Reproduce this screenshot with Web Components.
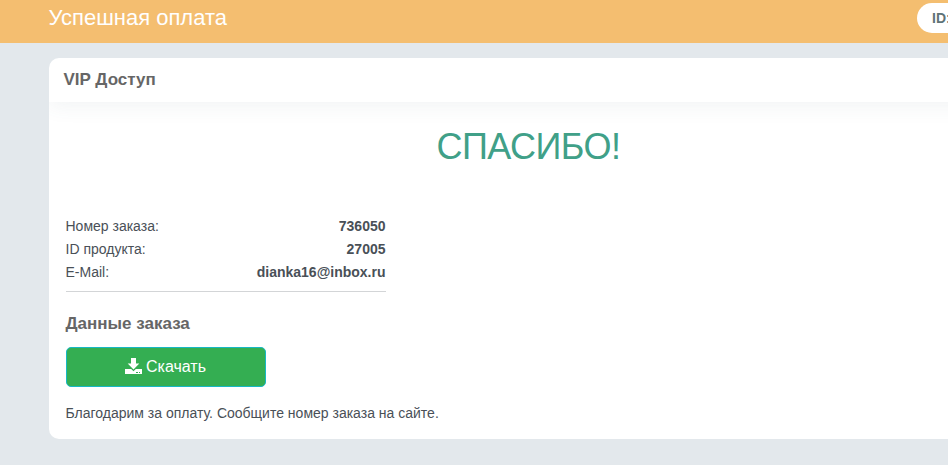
<!DOCTYPE html>
<html lang="ru">
<head>
<meta charset="utf-8">
<title>Успешная оплата</title>
<style>
  body {
    margin: 0;
    height: 465px;
    overflow: hidden;
    background: #e3e8ec;
    color: #495057;
    font: 14px/23px "Liberation Sans", Arial, sans-serif;
  }
</style>
</head>
<body>
<pay-page>
  <top-bar slot="top" heading="Успешная оплата"><id-badge>ID:</id-badge></top-bar>
  <order-card heading="VIP Доступ">
    <thank-you>СПАСИБО!</thank-you>
    <order-info>
      <info-row label="Номер заказа:">736050</info-row>
      <info-row label="ID продукта:">27005</info-row>
      <info-row label="E-Mail:">dianka16@inbox.ru</info-row>
    </order-info>
    <order-data heading="Данные заказа">
      <download-button slot="action">Скачать</download-button>
      Благодарим за оплату. Сообщите номер заказа на сайте.
    </order-data>
  </order-card>
</pay-page>

<script>
  // Общая функция: регистрирует элемент с его разметкой
  function crear(name, render) {
    customElements.define(name, class extends HTMLElement {
      constructor() {
        super();
        this.attachShadow({mode: "open"});
      }
      connectedCallback() {
        this.shadowRoot.innerHTML = render(this);
      }
    });
  }

  // Страница: шапка и содержимое
  crear("pay-page", () => `
    <style>
      :host { display: block; overflow: hidden; }
      main { padding: 15px 0 0 49px; }
    </style>
    <slot name="top"></slot>
    <main><slot></slot></main>
  `);

  crear("top-bar", (el) => `
    <style>
      :host {
        display: flex;
        justify-content: space-between;
        height: 43px;
        padding-left: 48.5px;
        box-sizing: border-box;
        background: #f4be70;
      }
      h1 { margin: 5px 0 0; font-size: 22px; line-height: 26px; font-weight: 400; color: #fff; }
    </style>
    <h1>${el.getAttribute("heading")}</h1>
    <slot></slot>
  `);

  crear("id-badge", () => `
    <style>
      :host {
        display: block;
        box-sizing: border-box;
        width: 31px;
        height: 30px;
        margin-top: 3px;
        padding-left: 15px;
        white-space: nowrap;
        border-radius: 15px 0 0 15px;
        background: #fff;
        color: #5f7377;
        font-weight: 700;
        line-height: 30px;
      }
    </style>
    <slot></slot>
  `);

  // Карточка заказа
  crear("order-card", (el) => `
    <style>
      :host {
        display: block;
        height: 381px;
        overflow: hidden;
        border-radius: 10px 0 0 10px;
        background: #fff;
      }
      header {
        height: 44px;
        margin-right: -60px;
        padding: 0 14.5px;
        box-shadow: 0 5px 20px rgba(69, 101, 115, .07);
      }
      h2 { margin: 0; font-size: 17px; line-height: 43px; color: #666; }
      section { padding: 0 17px; }
    </style>
    <header><h2>${el.getAttribute("heading")}</h2></header>
    <section><slot></slot></section>
  `);

  crear("thank-you", () => `
    <style>
      :host {
        display: block;
        margin-right: -60px;
        padding-top: 25px;
        text-align: center;
        color: #40a088;
        font-size: 36px;
        line-height: 40px;
        letter-spacing: -.5px;
      }
    </style>
    <slot></slot>
  `);

  crear("order-info", () => `
    <style>
      :host {
        display: block;
        width: 320px;
        margin-top: 48px;
        padding-bottom: 7px;
        border-bottom: 1px solid #d3d5d7;
      }
    </style>
    <slot></slot>
  `);

  crear("info-row", (el) => `
    <style>
      :host {
        display: flex;
        justify-content: space-between;
        height: 23px;
        margin: 0 .5px 0 -.5px;
      }
    </style>
    <span>${el.getAttribute("label")}</span>
    <b><slot></slot></b>
  `);

  crear("order-data", (el) => `
    <style>
      :host { display: block; }
      h3 { margin: 20px 0 12px -.5px; font-size: 17px; line-height: 23px; color: #666; }
      p { margin: 15px 0 0 -.5px; }
    </style>
    <h3>${el.getAttribute("heading")}</h3>
    <slot name="action"></slot>
    <p><slot></slot></p>
  `);

  crear("download-button", () => `
    <style>
      :host { display: block; width: 200px; }
      button {
        display: flex;
        align-items: center;
        justify-content: center;
        gap: 4px;
        width: 100%;
        height: 40px;
        padding: 0 1px 0 0;
        border: 1px solid #17b8c4;
        border-radius: 5px;
        background: #34ae52;
        color: #fff;
        font: 16px/22px "Liberation Sans", Arial, sans-serif;
      }
      svg { display: block; margin-bottom: 1px; }
    </style>
    <button>
      <svg width="17" height="17" viewBox="0 0 17 17">
        <path fill="#fff" d="M6 0h5v5.5h3.3L8.5 11.5 2.7 5.5H6z"/>
        <path fill="#fff" d="M0 11h6.2l2.3 2.2 2.3-2.2H17v5H0z"/>
        <path fill="#34ae52" d="M11 14h2v1h-2zM14 14h1v1h-1z"/>
      </svg>
      <slot></slot>
    </button>
  `);
</script>
</body>
</html>
